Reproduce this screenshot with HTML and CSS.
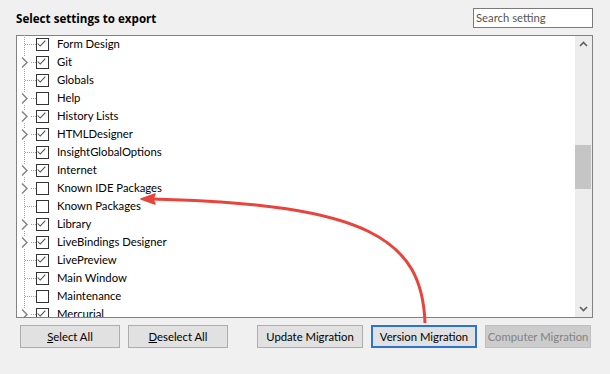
FILE: index.html
```html
<!DOCTYPE html>
<html lang="en">
<head>
    <meta charset="UTF-8">
    <title>Export settings</title>
    <link rel="stylesheet" href="styles.css">
</head>
<body>
    <svg class="defs" width="0" height="0">
        <symbol id="twig" viewBox="0 0 19 18">
            <line x1="7.5" y1="0" x2="7.5" y2="18" stroke="#a0a0a0" stroke-dasharray="1 1"/>
            <line x1="8" y1="9.5" x2="19" y2="9.5" stroke="#a0a0a0" stroke-dasharray="1 1"/>
        </symbol>
        <symbol id="twig-parent" viewBox="0 0 19 18">
            <line x1="7.5" y1="0" x2="7.5" y2="18" stroke="#a0a0a0" stroke-dasharray="1 1"/>
            <line x1="12" y1="9.5" x2="19" y2="9.5" stroke="#a0a0a0" stroke-dasharray="1 1"/>
            <rect x="3" y="3" width="10" height="13" fill="#fff"/>
            <path d="M5 4.5 L10 9.5 L5 14.5" fill="none" stroke="#858585" stroke-width="1.5"/>
        </symbol>
        <symbol id="check" viewBox="0 0 13 13">
            <path d="M2 6.5 L5 9.5 L11 3" fill="none" stroke="#4a4a4a" stroke-width="1.2"/>
        </symbol>
    </svg>

    <div class="dialog">
        <div class="header">
            <h1>Select settings to export</h1>
            <div class="search">Search setting</div>
        </div>

        <div class="tree">
            <div class="rows" id="rows"></div>
            <div class="scrollbar">
                <svg class="arrow" width="17" height="17" viewBox="0 0 17 17"><path d="M5 10 L8.5 6.5 L12 10" fill="none" stroke="#606060" stroke-width="1.6"/></svg>
                <div class="track"><div class="thumb"></div></div>
                <svg class="arrow" width="17" height="17" viewBox="0 0 17 17"><path d="M5 7 L8.5 10.5 L12 7" fill="none" stroke="#606060" stroke-width="1.6"/></svg>
            </div>
        </div>

        <div class="buttons">
            <button class="btn"><u>S</u>elect All</button>
            <button class="btn"><u>D</u>eselect All</button>
            <button class="btn wide gap">Update Migration</button>
            <button class="btn wide focused">Version Migration</button>
            <button class="btn wide disabled">Computer Migration</button>
        </div>
    </div>

    <svg class="callout" width="610" height="374" viewBox="0 0 610 374">
        <path d="M425 323 C 422 240, 370 204, 152 199" fill="none" stroke="#e8443c" stroke-width="3"/>
        <path d="M141 199 L155 194 L153 199 L155 204 Z" fill="#e8443c" stroke="#e8443c" stroke-width="1.5" stroke-linejoin="round"/>
    </svg>

    <script>
        // [label, checked, has children]
        const settings = [
            ['Form Design', true, false],
            ['Git', true, true],
            ['Globals', true, false],
            ['Help', false, true],
            ['History Lists', true, true],
            ['HTMLDesigner', true, true],
            ['InsightGlobalOptions', true, false],
            ['Internet', true, true],
            ['Known IDE Packages', false, true],
            ['Known Packages', false, false],
            ['Library', true, true],
            ['LiveBindings Designer', true, true],
            ['LivePreview', true, false],
            ['Main Window', true, false],
            ['Maintenance', false, false],
            ['Mercurial', true, true]
        ];

        const rows = document.getElementById('rows');
        for (const [label, checked, parent] of settings) {
            const row = document.createElement('div');
            row.className = 'row';
            row.innerHTML =
                `<svg class="twig" width="19" height="18"><use href="#${parent ? 'twig-parent' : 'twig'}"/></svg>` +
                `<span class="box">${checked ? '<svg width="11" height="11" viewBox="1 1 11 11"><use href="#check"/></svg>' : ''}</span>` +
                `<span class="label">${label}</span>`;
            rows.appendChild(row);
        }
    </script>
</body>
</html>
```

FILE: styles.css
```css
body {
    margin: 0;
    background-color: #f0f0f0;
    font-family: Lato, 'Open Sans', sans-serif;
    font-size: 11.3px;
    color: #000;
}
.defs {
    position: absolute;
}
.dialog {
    padding: 8px 17px 0 16px;
}
.header {
    display: flex;
    justify-content: space-between;
    align-items: flex-end;
    height: 20px;
    margin-bottom: 7px;
}
h1 {
    margin: 0 0 1px 0;
    font-family: 'Open Sans', sans-serif;
    font-size: 11.6px;
    font-weight: bold;
    line-height: 16px;
}
.search {
    box-sizing: border-box;
    width: 120px;
    height: 20px;
    border: 1px solid #7a7a7a;
    background-color: #fff;
    color: #555;
    padding: 0 2px;
    line-height: 17px;
}
.tree {
    display: flex;
    height: 281px;
    border: 1px solid #828282;
    background-color: #fff;
}
.rows {
    flex: 1;
    overflow: hidden;
    padding-top: 0;
    margin-top: -1px;
}
.row {
    display: flex;
    align-items: center;
    height: 18px;
}
.twig {
    flex: none;
}
.box {
    box-sizing: border-box;
    width: 13px;
    height: 13px;
    border: 1px solid #333;
    display: flex;
    align-items: center;
    justify-content: center;
    margin-right: 8px;
}
.label {
    white-space: nowrap;
    line-height: 18px;
}
.scrollbar {
    width: 17px;
    background-color: #ededed;
    display: flex;
    flex-direction: column;
}
.arrow {
    flex: none;
}
.track {
    flex: 1;
    padding-top: 92px;
}
.thumb {
    height: 44px;
    margin-right: 1px;
    background-color: #c5c5c5;
}
.buttons {
    display: flex;
    margin-top: 7px;
    padding-left: 4px;
}
.btn {
    flex: none;
    box-sizing: border-box;
    width: 100px;
    height: 23px;
    margin-right: 8px;
    border: 1px solid #adadad;
    background-color: #e1e1e1;
    font-family: inherit;
    font-size: inherit;
    color: #000;
    padding: 0;
    white-space: nowrap;
}
.btn:last-child {
    margin-right: 0;
}
.btn.wide {
    width: 106px;
}
.btn.gap {
    margin-left: 21px;
}
.btn.focused {
    border: 2px solid #2e72d2;
}
.btn.disabled {
    background-color: #cccccc;
    border-color: #bfbfbf;
    color: #838383;
}
.callout {
    position: absolute;
    left: 0;
    top: 0;
    pointer-events: none;
}
```
